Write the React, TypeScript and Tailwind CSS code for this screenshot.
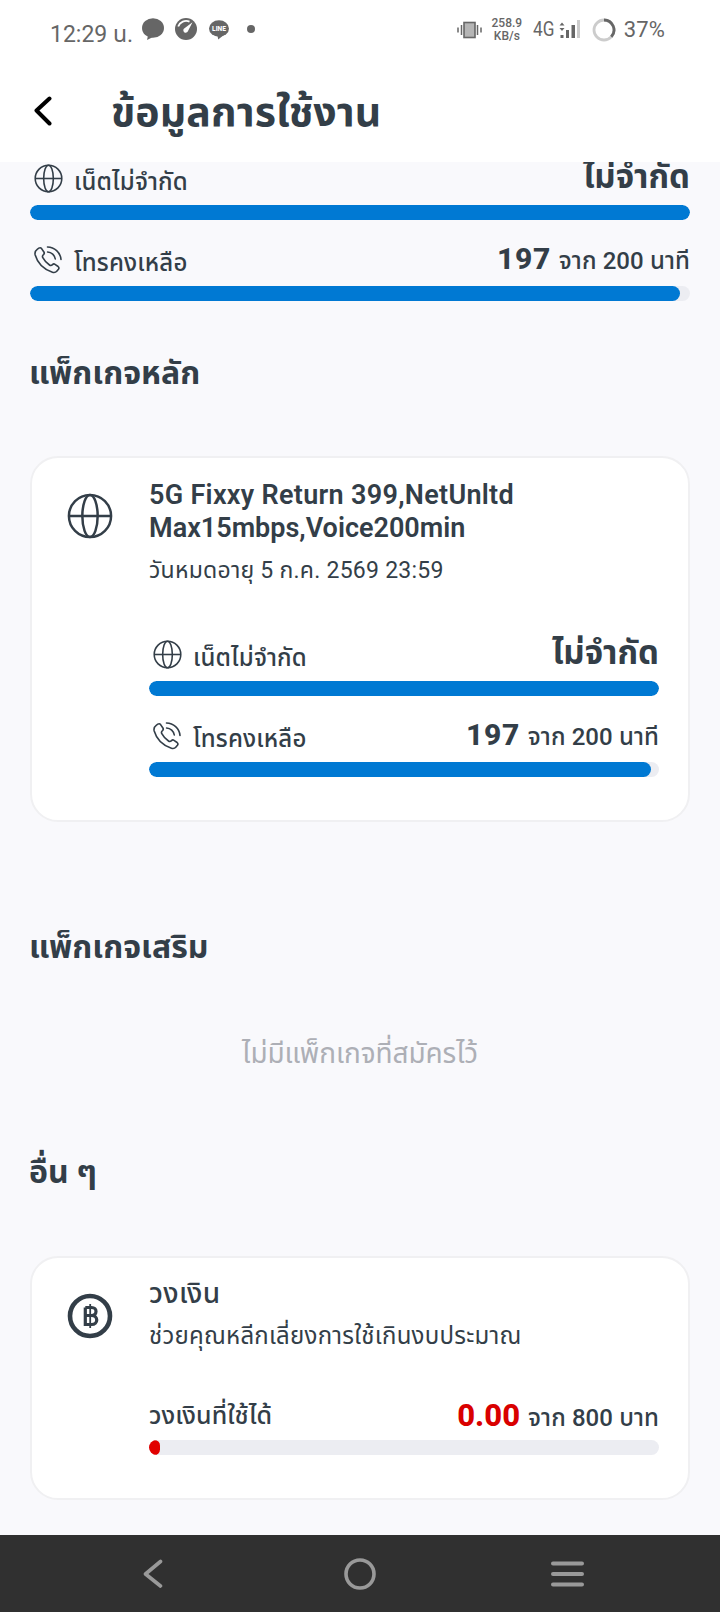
import React from "react";

const ink = "#333e48";

function Globe({ size, stroke }: { size: number; stroke: number }) {
  return (
    <svg width={size} height={size} viewBox="0 0 48 48" fill="none" stroke={ink} strokeWidth={stroke} className="block shrink-0">
      <circle cx="24" cy="24" r="22" />
      <ellipse cx="24" cy="24" rx="8" ry="22" />
      <path d="M2 24h44" />
    </svg>
  );
}

function Phone() {
  return (
    <svg width="28" height="28" viewBox="0 0 28 28" fill="none" stroke={ink} strokeWidth="1.6" strokeLinecap="round" strokeLinejoin="round" className="block shrink-0">
      <path d="M3.2 3.3 4.8 2.2C5.8 1.5 6.9 1.7 7.6 2.6L9.9 6C10.5 7 10.3 7.9 9.5 8.6C8.3 9.6 8.1 10.4 8.8 11.6C10.4 14.6 12.6 17 15.5 19C16.6 19.8 17.5 19.6 18.5 18.6C19.3 17.8 20.1 17.7 21 18.3L24.1 20.5C25.1 21.3 25.2 22.2 24.4 23.3L23 25C21.9 26.3 20.3 26.8 18.4 26.2C9.9 23.4 3.5 17 1.2 9C.6 6.6 1.2 4.7 3.2 3.3Z" />
      <path d="M13.5 1C20.5 1.2 26.4 6.5 27 13.5" />
      <path d="M13.6 6C17.5 6.2 20.7 9.2 21.3 13" />
    </svg>
  );
}

function Baht() {
  return (
    <svg width="46" height="46" viewBox="0 0 46 46" fill="none" stroke={ink} className="block shrink-0">
      <circle cx="23" cy="23" r="20" strokeWidth="4.6" />
      <path d="M18.300 14.5H24.5C30.5 14.5 30.5 22.5 24.5 22.5H18.300M24.5 22.5C31.5 22.5 31.5 31.5 24.5 31.5H18.300V14.5" strokeWidth="3.2" />
      <path d="M23.2 11V35" strokeWidth="1.8" />
    </svg>
  );
}

function Bar({ percent, color, min }: { percent: number; color: string; min?: number }) {
  return (
    <div className="h-[15px] w-full overflow-hidden rounded-full bg-[#ecedf2]">
      <div className="h-full rounded-full" style={{ width: `${percent}%`, minWidth: min, backgroundColor: color }} />
    </div>
  );
}

function NetUsage() {
  return (
    <div>
      <div className="flex h-[50px] items-start justify-between">
        <div className="flex items-start gap-[11px] pl-1">
          <div className="pt-[9px]">
            <Globe size={29} stroke={2.6} />
          </div>
          <span className="pt-[11px] text-[24px] leading-8 font-medium tracking-[0.15px]">เน็ตไม่จำกัด</span>
        </div>
        <span className="text-[33px] leading-[44px] font-bold">ไม่จำกัด</span>
      </div>
      <Bar percent={100} color="#0079d3" />
    </div>
  );
}

function VoiceUsage({ percent }: { percent: number }) {
  return (
    <div className="mt-4">
      <div className="flex h-[50px] items-start justify-between">
        <div className="flex items-start gap-3 pl-1">
          <div className="pt-[10px]">
            <Phone />
          </div>
          <span className="pt-[11px] text-[24px] leading-8 font-medium tracking-[0.15px]">โทรคงเหลือ</span>
        </div>
        <div className="flex items-baseline gap-2 pt-px leading-[44px]">
          <span className="text-[30px] font-extrabold tracking-[0.6px]">197</span>
          <span className="text-[24px] font-medium tracking-[0.1px]">จาก 200 นาที</span>
        </div>
      </div>
      <Bar percent={percent} color="#0079d3" />
    </div>
  );
}

function StatusBar() {
  return (
    <div className="flex h-[60px] items-start justify-between pt-[17px] pr-[55px] pl-[50px] text-[#666]">
      <div className="flex items-start">
        <span className="pt-[4px] text-[23px] leading-7">12:29 น.</span>
        <svg width="22" height="22" viewBox="0 0 22 22" fill="#666" className="mt-px ml-[9px]">
          <ellipse cx="11" cy="10" rx="11" ry="9.8" />
          <path d="M6 17.5 5 22 13 18Z" />
        </svg>
        <svg width="22" height="22" viewBox="0 0 22 22" className="mt-px ml-[11px]">
          <circle cx="11" cy="11" r="11" fill="#666" />
          <path d="M3.2 8.500A8.500 8.500 0 0 1 14.500 3.600" fill="none" stroke="#fff" strokeWidth="1.800" />
          <path d="M17.500 4.200 13 13A2.400 2.400 0 1 1 9.500 10.200Z" fill="#fff" />
        </svg>
        <svg width="20" height="20" viewBox="0 0 20 20" className="mt-[3px] ml-3">
          <ellipse cx="10" cy="8.500" rx="10" ry="8.300" fill="#666" />
          <path d="M8.500 15.500 9.200 19.500 16 14Z" fill="#666" />
          <text x="10" y="11" textAnchor="middle" fontSize="6.600" fontWeight="800" fill="#fff">LINE</text>
        </svg>
        <span className="mt-2 ml-[18px] size-2 rounded-full bg-[#666]" />
      </div>
      <div className="flex items-start">
        <svg width="25" height="18" viewBox="0 0 25 18" className="mt-1">
          <path d="M1 6.500v5M4.500 4v10M20.500 4v10M24 6.500v5" stroke="#666" strokeWidth="1.500" />
          <rect x="7" y="1.500" width="11" height="15" fill="#b5b5b5" stroke="#666" strokeWidth="1.600" />
        </svg>
        <div className="ml-[9px] w-8 text-center text-[12px] leading-[13px] font-medium">
          <div>258.9</div>
          <div>KB/s</div>
        </div>
        <span className="ml-[10px] w-[19px] origin-left scale-x-[0.86] text-[20px] leading-6">4G</span>
        <svg width="22" height="19" viewBox="0 0 22 19" fill="#666" className="mt-[2px] ml-[7px]">
          <path d="M3 3.500 5.500 6.500H.500ZM3 12 .500 9H5.500Z" />
          <rect x="1.500" y="16" width="3" height="3" />
          <rect x="7" y="11" width="3" height="8" />
          <rect x="12.500" y="6" width="3.500" height="13" />
          <rect x="18" y="1" width="3" height="18" fill="#ccc" />
        </svg>
        <svg width="24" height="24" viewBox="0 0 24 24" fill="none" strokeWidth="2.800" className="mt-px ml-[11px]">
          <circle cx="12" cy="12" r="10" stroke="#ccc" />
          <path d="M12 2A10 10 0 0 1 19.300 18.800" stroke="#666" />
        </svg>
        <span className="ml-2 pt-px text-[22px] leading-6 tracking-[0.1px]">37%</span>
      </div>
    </div>
  );
}

export default function App() {
  return (
    <div className="flex h-[1612px] w-[720px] flex-col overflow-hidden bg-[#f9f9fc] font-['Roboto','Noto_Sans_Thai','Noto_Sans',sans-serif] whitespace-nowrap text-[#333e48]">
      <header className="h-[162px] shrink-0 bg-white">
        <StatusBar />
        <div className="flex h-[102px] items-start pt-[26px] pl-[34px]">
          <svg width="18" height="30" viewBox="0 0 18 30" fill="none" stroke="#000" strokeWidth="4" strokeLinecap="round" strokeLinejoin="round" className="mt-[10px]">
            <path d="M15.500 2.500 2.500 14.500 15.500 27.500" />
          </svg>
          <h1 className="mt-px ml-[59px] text-[41px] leading-[50px] font-bold tracking-[0.1px]">ข้อมูลการใช้งาน</h1>
        </div>
      </header>

      <main className="h-[1373px] shrink-0 overflow-hidden px-[30px]">
        <section className="-mt-[7px]">
          <NetUsage />
          <VoiceUsage percent={98.5} />
        </section>

        <h2 className="mt-[49px] -ml-px h-[106px] text-[32px] leading-[47px] font-bold">แพ็กเกจหลัก</h2>

        <section className="flex h-[366px] rounded-[28px] border-2 border-[#f0f0f2] bg-white pr-[29px] pl-[35px]">
          <div className="w-[82px] shrink-0 pt-[35px]">
            <Globe size={46} stroke={2.6} />
          </div>
          <div className="flex-1 pt-[21px]">
            <h3 className="text-[27px] leading-[33px] font-semibold">
              <span className="tracking-[0.3px]">5G Fixxy Return 399,NetUnltd</span>
              <br />
              Max15mbps,Voice200min
            </h3>
            <p className="mt-[10px] mb-[44px] text-[23px] leading-8 tracking-[0.25px]">วันหมดอายุ 5 ก.ค. 2569 23:59</p>
            <NetUsage />
            <VoiceUsage percent={98.5} />
          </div>
        </section>

        <h2 className="mt-[101px] -ml-px h-[106px] text-[32px] leading-[49px] font-bold">แพ็กเกจเสริม</h2>
        <p className="h-[120px] text-center text-[28px] leading-[49px] tracking-[-0.1px] text-[#adafb6]">ไม่มีแพ็กเกจที่สมัครไว้</p>
        <h2 className="-ml-px h-[107px] text-[32px] leading-[47px] font-bold">อื่น ๆ</h2>

        <section className="flex h-[244px] rounded-[28px] border-2 border-[#f0f0f2] bg-white pr-[29px] pl-[35px]">
          <div className="w-[82px] shrink-0 pt-[35px]">
            <Baht />
          </div>
          <div className="flex-1 pt-[19px]">
            <h3 className="text-[28px] leading-[33px] font-medium tracking-[0.4px]">วงเงิน</h3>
            <p className="mt-[10px] text-[24px] leading-8 tracking-[0.25px]">ช่วยคุณหลีกเลี่ยงการใช้เกินงบประมาณ</p>
            <div className="mt-[38px] flex h-[50px] items-start justify-between">
              <span className="text-[25px] leading-[52px] font-medium tracking-[0.1px]">วงเงินที่ใช้ได้</span>
              <div className="flex items-baseline gap-2 pt-px leading-[50px]">
                <span className="text-[31px] font-extrabold text-[#d90000]">0.00</span>
                <span className="text-[24px] font-medium tracking-[0.1px]">จาก 800 บาท</span>
              </div>
            </div>
            <Bar percent={0} min={11} color="#e10000" />
          </div>
        </section>
      </main>

      <nav className="flex h-[77px] shrink-0 items-center bg-[#303030] pl-[142px]">
        <svg width="22" height="30" viewBox="0 0 22 30" fill="none" stroke="#999" strokeWidth="3.600" strokeLinecap="round" strokeLinejoin="round">
          <path d="M18.500 2.500 3.500 15 18.500 27" />
        </svg>
        <svg width="32" height="32" viewBox="0 0 32 32" fill="none" stroke="#999" strokeWidth="3.600" className="ml-[180px]">
          <circle cx="16" cy="16" r="14" />
        </svg>
        <svg width="33" height="26" viewBox="0 0 33 26" fill="none" stroke="#999" strokeWidth="4" strokeLinecap="round" className="ml-[175px]">
          <path d="M2 2.500H31M2 13H31M2 23.500H31" />
        </svg>
      </nav>
    </div>
  );
}
